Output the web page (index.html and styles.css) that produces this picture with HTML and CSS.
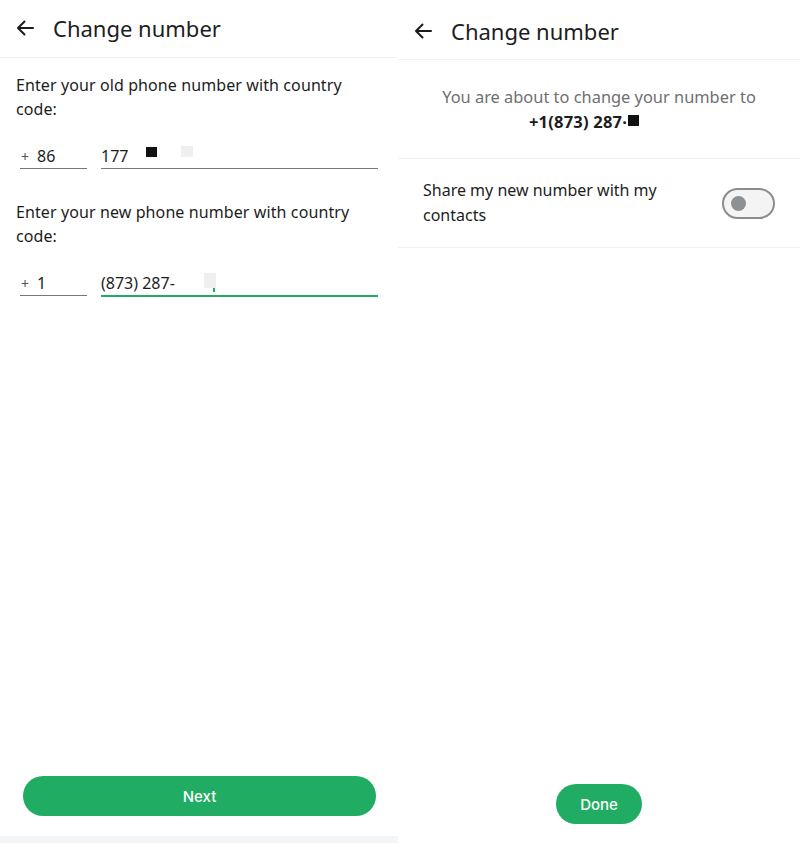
FILE: index.html
```html
<!DOCTYPE html>
<html>
<head>
<meta charset="utf-8">
<link rel="stylesheet" href="styles.css">
</head>
<body>
<div class="screens">
  <section class="panel left">
    <header class="bar">
      <svg class="back" width="18" height="16" viewBox="0 0 18 16"><path d="M17 8H2M8.5 1.5L2 8l6.5 6.5" fill="none" stroke="#1b1b1b" stroke-width="2" stroke-linecap="round" stroke-linejoin="round"/></svg>
      <h1 class="title">Change number</h1>
    </header>
    <div class="form">
      <p class="label">Enter your old phone number with country code:</p>
      <div class="phone-row">
        <div class="cc"><span class="plus">+</span>86</div>
        <div class="num">177<span class="mask dark m1"></span><span class="mask light m2"></span></div>
      </div>
      <p class="label">Enter your new phone number with country code:</p>
      <div class="phone-row">
        <div class="cc"><span class="plus">+</span>1</div>
        <div class="num active">(873) 287-<span class="mask white m3"></span><span class="mask light m4"></span><span class="caret"></span></div>
      </div>
    </div>
    <div class="foot"><button class="btn wide">Next</button></div>
    <div class="strip"></div>
  </section>
  <section class="panel right">
    <header class="bar bar2">
      <svg class="back" width="18" height="16" viewBox="0 0 18 16"><path d="M17 8H2M8.5 1.5L2 8l6.5 6.5" fill="none" stroke="#1b1b1b" stroke-width="2" stroke-linecap="round" stroke-linejoin="round"/></svg>
      <h1 class="title">Change number</h1>
    </header>
    <div class="confirm">
      <p class="about">You are about to change your number to</p>
      <p class="newnum">+1(873) 287·<span class="mask dark m5"></span></p>
    </div>
    <div class="share">
      <span class="share-text">Share my new number with my contacts</span>
      <span class="toggle"><span class="knob"></span></span>
    </div>
    <div class="foot foot2"><button class="btn small">Done</button></div>
  </section>
</div>
</body>
</html>
```
FILE: styles.css
```css
* { box-sizing: border-box; }
html, body { margin: 0; padding: 0; background: #fff; }
body { font-family: "Noto Sans", Roboto, sans-serif; color: #1d1d1d; }
.screens { display: flex; width: 800px; height: 843px; }
.panel { display: flex; flex-direction: column; height: 843px; }
.left { width: 398px; }
.right { flex: 1; }
.bar { height: 58px; display: flex; align-items: center; padding-left: 16px; padding-bottom: 2px; border-bottom: 1px solid #f3f3f3; }
.bar2 { height: 60px; padding-top: 4px; padding-bottom: 2px; }
.back { display: block; }
.title { margin: 0 0 0 19px; font-size: 22px; font-weight: 400; color: #1d1d1d; }
.form { padding: 15px 20px 0 16px; }
.label { margin: 0; font-size: 16px; line-height: 24px; color: #1d1d1d; letter-spacing: 0.1px; }
.phone-row { display: flex; gap: 14px; margin: 14px 0 31px 4px; }
.cc { width: 67px; height: 34px; padding-top: 8px; border-bottom: 1px solid #777; font-size: 16px; line-height: 26px; padding-left: 1px; }
.plus { font-size: 14px; margin-right: 8px; color: #555; }
.num { flex: 1; height: 34px; padding-top: 8px; border-bottom: 1px solid #777; font-size: 16px; line-height: 26px; }
.num.active { border-bottom: 2px solid #20ad63; height: 35px; }
.mask { display: inline-block; vertical-align: top; }
.dark { background: #111; }
.light { background: #efefef; }
.white { background: #fff; }
.m1 { width: 11px; height: 10px; margin: 4px 0 0 18px; }
.m2 { width: 12px; height: 11px; margin: 3px 0 0 24px; }
.m3 { width: 27px; height: 14px; margin: 6px 0 0 0; }
.m4 { width: 12px; height: 15px; margin: 3px 0 0 2px; }
.caret { display: inline-block; vertical-align: top; width: 2px; height: 4px; margin: 18px 0 0 -3px; background: #20ad63; }
.m5 { width: 11px; height: 11px; margin: 6px 0 0 1px; }
.foot { margin-top: auto; padding: 0 22px 20px 23px; }
.btn { border: 0; background: #20ad63; color: #fff; font-family: Inter, Roboto, sans-serif; font-size: 15px; font-weight: 500; height: 40px; padding-top: 2px; border-radius: 20px; }
.wide { width: 353px; display: block; }
.strip { height: 7px; background: #f4f5f7; }
.confirm { text-align: center; padding: 24px 0 24px; border-bottom: 1px solid #f0f0f0; }
.about { margin: 0; font-size: 16.4px; line-height: 25px; color: #6f6f6f; }
.newnum { margin: 0; padding-right: 30px; font-size: 16.5px; line-height: 25px; font-weight: 700; color: #1d1d1d; letter-spacing: 0.2px; }
.share { display: flex; align-items: center; justify-content: space-between; padding: 19px 25px 19px 25px; border-bottom: 1px solid #f0f0f0; }
.share-text { width: 260px; font-size: 16px; line-height: 25px; }
.toggle { width: 53px; height: 31px; border: 2px solid #8c8c8c; border-radius: 16px; background: #f4f4f4; position: relative; }
.knob { position: absolute; left: 7px; top: 6px; width: 15px; height: 15px; border-radius: 50%; background: #8d9194; }
.foot2 { display: flex; justify-content: center; padding: 0 0 19px 0; }
.small { width: 86px; }
```
